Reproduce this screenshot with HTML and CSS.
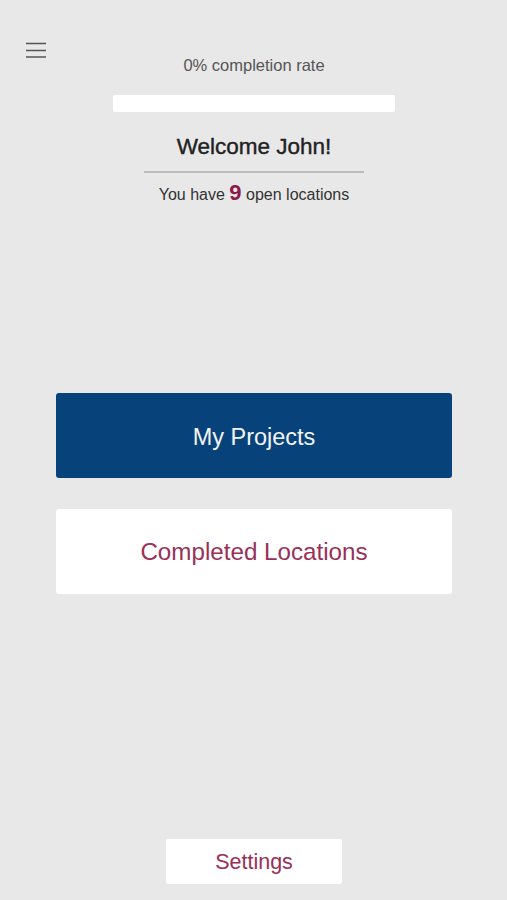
FILE: index.html
```html
<!DOCTYPE html>
<html>
<head>
    <link rel="stylesheet" href="styles.css">
</head>

<body>
    <div id="home_screen">
        <div id="top_bar">
            <button id="menu_button" aria-label="Menu">
                <svg width="20" height="16" viewBox="0 0 20 16">
                    <path d="M0 1.5H20M0 8.5H20M0 15H20" stroke="#555" stroke-width="1.6" fill="none"/>
                </svg>
            </button>
        </div>

        <div id="progress_div">
            <label id="completion_rate">0% completion rate</label>
            <div id="progress_bar"><div id="progress_fill" style="width:0%"></div></div>
        </div>

        <div id="welcome_div">
            <h4 id="welcome">Welcome John!</h4>
            <p id="open_locations">You have <span id="open_count">9</span> open locations</p>
        </div>

        <div id="main_buttons">
            <button id="projects_button">My Projects</button>
            <button id="completed_button">Completed Locations</button>
        </div>

        <div id="bottom_div">
            <button id="settings_button">Settings</button>
        </div>
    </div>
</body>

</html>
```

FILE: styles.css
```css
/* General body styles */
body {
    font-family: "Liberation Sans", Arial, sans-serif;
    margin: 0;
    padding: 0;
    background-color: #e8e8e8;
}

/* Whole screen */
#home_screen {
    display: flex;
    flex-direction: column;
    height: 900px;
    box-sizing: border-box;
    padding: 0 55px 16px 56px;
}

/* Menu button */
#top_bar {
    height: 38px;
    margin-left: -30px;
    padding-top: 42px;
    box-sizing: border-box;
}

#menu_button {
    display: block;
    padding: 0;
    border: none;
    background: none;
    cursor: pointer;
}

/* Completion rate */
#progress_div {
    display: flex;
    flex-direction: column;
    align-items: center;
}

#completion_rate {
    font-size: 16.5px;
    color: #555;
    margin-top: 14px;
}

#progress_bar {
    width: 282px;
    height: 17px;
    margin-top: 20px;
    background-color: #fff;
    border-radius: 2px;
}

#progress_fill {
    height: 100%;
    background-color: #08427a;
}

/* Welcome text */
#welcome_div {
    display: flex;
    flex-direction: column;
    align-items: center;
    margin-top: 22px;
}

#welcome {
    margin: 0;
    padding-bottom: 11px;
    width: 220px;
    text-align: center;
    font-size: 22.5px;
    font-weight: normal;
    color: #222;
    border-bottom: 2px solid #bcbcbc;
    -webkit-text-stroke: 0.4px #222;
}

#open_locations {
    margin: 7px 0 0 0;
    font-size: 16px;
    color: #333;
}

#open_count {
    font-size: 22px;
    font-weight: bold;
    color: #8c1b4b;
}

/* Main buttons */
#main_buttons {
    display: flex;
    flex-direction: column;
    gap: 31px;
    margin-top: 187px;
}

#main_buttons button {
    height: 85px;
    padding: 3px 0 0 0;
    font-family: "Liberation Sans", Arial, sans-serif;
    font-size: 23.5px;
    border: none;
    border-radius: 3px;
    cursor: pointer;
}

#main_buttons #projects_button {
    background-color: #08427a;
    color: #f2f4f8;
}

#main_buttons #completed_button {
    padding-top: 1px;
    font-size: 24.2px;
    background-color: #fff;
    color: #993059;
}

/* Settings */
#bottom_div {
    display: flex;
    justify-content: center;
    margin-top: auto;
}

#settings_button {
    width: 176px;
    height: 45px;
    padding-top: 2px;
    font-family: "Liberation Sans", Arial, sans-serif;
    font-size: 21.5px;
    color: #993059;
    background-color: #fff;
    border: none;
    border-radius: 2px;
    cursor: pointer;
}
```
